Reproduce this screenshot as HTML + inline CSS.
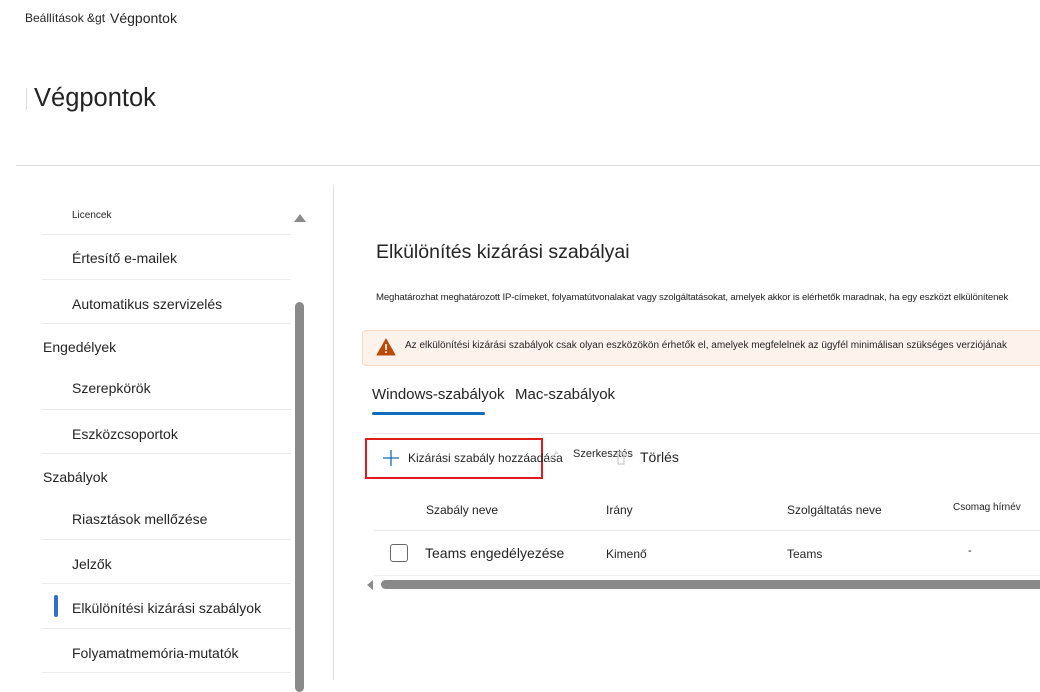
<!DOCTYPE html>
<html><head><meta charset="utf-8"><style>
*{margin:0;padding:0;box-sizing:border-box}
body{width:1040px;height:680px;overflow:hidden;background:#fff;font-family:"Liberation Sans","DejaVu Sans",sans-serif;color:#242424;position:relative}
.a{position:absolute;white-space:nowrap}
.sep{position:absolute;left:42px;width:249px;height:1px;background:#ebebeb}
.nav{position:absolute;left:72px;font-size:14px}
</style></head><body>
<div class="a" style="left:25px;top:11px;font-size:12px">Beállítások &amp;gt</div>
<div class="a" style="left:110px;top:10px;font-size:14px">Végpontok</div>
<div class="a" style="left:26px;top:88px;width:1px;height:22px;background:#ddd"></div>
<div class="a" style="left:34px;top:84px;font-size:25.5px">Végpontok</div>
<div class="a" style="left:16px;top:165px;width:1024px;height:1px;background:#e0e0e0"></div>
<div class="a" style="left:333px;top:185px;width:1px;height:495px;background:#e0e0e0"></div>

<div class="nav" style="top:210px;font-size:10px">Licencek</div>
<div class="sep" style="top:234px"></div>
<div class="nav" style="top:250px">Értesítő e-mailek</div>
<div class="sep" style="top:279px"></div>
<div class="nav" style="top:296px">Automatikus szervizelés</div>
<div class="sep" style="top:323px"></div>
<div class="nav" style="left:43px;top:339px">Engedélyek</div>
<div class="nav" style="top:380px">Szerepkörök</div>
<div class="sep" style="top:409px"></div>
<div class="nav" style="top:426px">Eszközcsoportok</div>
<div class="sep" style="top:453px"></div>
<div class="nav" style="left:43px;top:469px">Szabályok</div>
<div class="nav" style="top:511px">Riasztások mellőzése</div>
<div class="sep" style="top:539px"></div>
<div class="nav" style="top:556px">Jelzők</div>
<div class="sep" style="top:583px"></div>
<div class="a" style="left:54px;top:595px;width:4px;height:22px;background:#2f6fd4;border-radius:2px"></div>
<div class="nav" style="top:600px">Elkülönítési kizárási szabályok</div>
<div class="sep" style="top:628px"></div>
<div class="nav" style="top:645px">Folyamatmemória-mutatók</div>
<div class="sep" style="top:672px"></div>
<div class="a" style="left:294px;top:214px;width:0;height:0;border-left:6px solid transparent;border-right:6px solid transparent;border-bottom:8px solid #8a8a8a"></div>
<div class="a" style="left:295px;top:302px;width:9px;height:390px;background:#8a8a8a;border-radius:5px"></div>

<div class="a" style="left:376px;top:241px;font-size:19.5px">Elkülönítés kizárási szabályai</div>
<div class="a" style="left:376px;top:292px;font-size:9.6px;letter-spacing:-0.15px">Meghatározhat meghatározott IP-címeket, folyamatútvonalakat vagy szolgáltatásokat, amelyek akkor is elérhetők maradnak, ha egy eszközt elkülönítenek</div>
<div class="a" style="left:362px;top:330px;width:690px;height:36px;background:#fdf3ec;border:1px solid #f6d9c4;border-radius:4px"></div>
<svg class="a" style="left:376px;top:338px" width="20" height="18" viewBox="0 0 20 18"><path d="M10 1 L19 17 L1 17 Z" fill="#bc4b09" stroke="#bc4b09" stroke-linejoin="round"/><rect x="9.2" y="6" width="1.6" height="6" fill="#fff"/><rect x="9.2" y="13.3" width="1.6" height="1.6" fill="#fff"/></svg>
<div class="a" style="left:405px;top:340px;font-size:10px">Az elkülönítési kizárási szabályok csak olyan eszközökön érhetők el, amelyek megfelelnek az ügyfél minimálisan szükséges verziójának</div>
<div class="a" style="left:372px;top:386px;font-size:15px">Windows-szabályok</div>
<div class="a" style="left:515px;top:386px;font-size:15px">Mac-szabályok</div>
<div class="a" style="left:372px;top:412px;width:113px;height:3px;background:#0f6cbd;border-radius:2px"></div>
<div class="a" style="left:372px;top:433px;width:668px;height:1px;background:#e8e8e8"></div>
<div class="a" style="left:365px;top:438px;width:178px;height:41px;border:2px solid #e01b1b"></div>
<svg class="a" style="left:383px;top:450px" width="16" height="16"><path d="M8 0V16M0 8H16" stroke="#0f6cbd" stroke-width="1.3"/></svg>
<div class="a" style="left:408px;top:451px;font-size:12px">Kizárási szabály hozzáadása</div>
<svg class="a" style="left:545px;top:448px" width="16" height="16"><path d="M3 13L12 4M10 3l3 3" stroke="#ccc" stroke-width="1.2" fill="none"/></svg>
<div class="a" style="left:573px;top:448px;font-size:11px">Szerkesztés</div>
<svg class="a" style="left:614px;top:450px" width="14" height="16"><path d="M2 4h10M4 4v10h6V4M5 2h4" stroke="#ccc" stroke-width="1.2" fill="none"/></svg>
<div class="a" style="left:640px;top:449px;font-size:14px">Törlés</div>
<div class="a" style="left:426px;top:503px;font-size:12px">Szabály neve</div>
<div class="a" style="left:606px;top:503px;font-size:12px">Irány</div>
<div class="a" style="left:787px;top:503px;font-size:12px">Szolgáltatás neve</div>
<div class="a" style="left:953px;top:502px;font-size:10px">Csomag hírnév</div>
<div class="a" style="left:374px;top:530px;width:666px;height:1px;background:#e8e8e8"></div>
<div class="a" style="left:390px;top:544px;width:18px;height:18px;border:1px solid #666;border-radius:3px"></div>
<div class="a" style="left:425px;top:545px;font-size:14px">Teams engedélyezése</div>
<div class="a" style="left:606px;top:547px;font-size:12px">Kimenő</div>
<div class="a" style="left:787px;top:547px;font-size:12px">Teams</div>
<div class="a" style="left:968px;top:545px;font-size:11px">-</div>
<div class="a" style="left:374px;top:575px;width:666px;height:1px;background:#eee"></div>
<div class="a" style="left:367px;top:580px;width:0;height:0;border-top:5px solid transparent;border-bottom:5px solid transparent;border-right:6px solid #8a8a8a"></div>
<div class="a" style="left:381px;top:580px;width:670px;height:9px;background:#8a8a8a;border-radius:5px"></div>
</body></html>
